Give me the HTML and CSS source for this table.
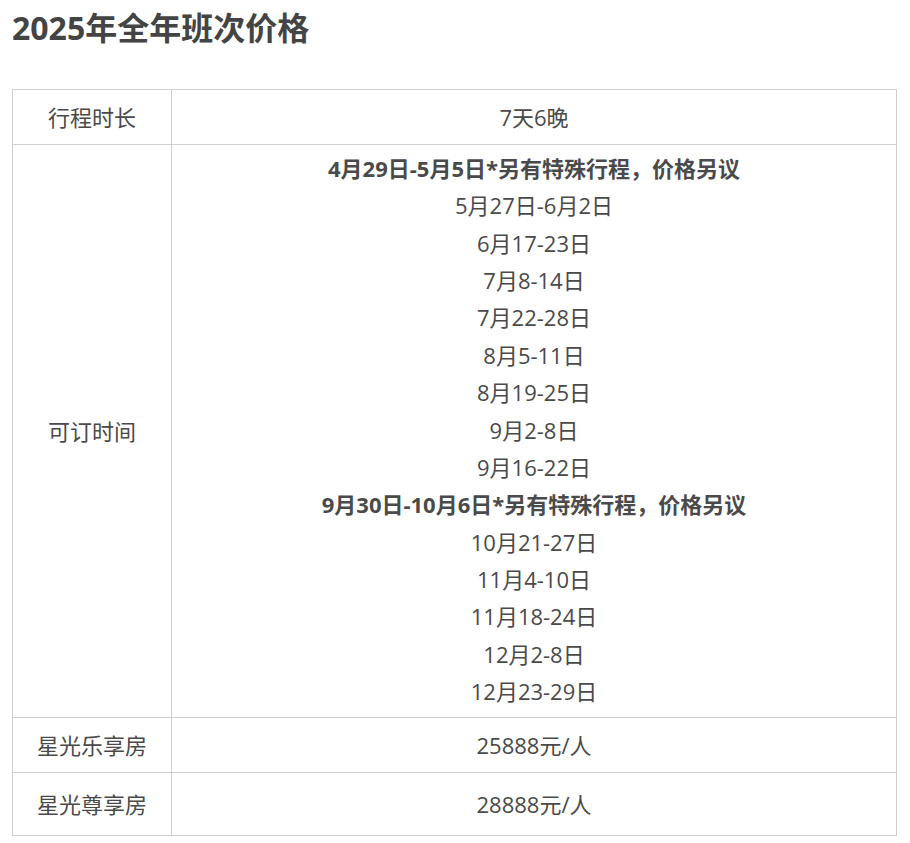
FILE: index.html
```html
<!DOCTYPE html>
<html lang="zh-CN">
<head>
<meta charset="utf-8">
<title>2025年全年班次价格</title>
<link rel="stylesheet" href="styles.css">
</head>
<body>
<h2 class="title">2025年全年班次价格</h2>
<table class="price-table">
  <colgroup><col class="col-label"><col class="col-value"></colgroup>
  <tr class="row">
    <td class="label">行程时长</td>
    <td class="value">7天6晚</td>
  </tr>
  <tr class="row dates">
    <td class="label">可订时间</td>
    <td class="value">
      <div class="line strong">4月29日-5月5日*另有特殊行程，价格另议</div>
      <div class="line">5月27日-6月2日</div>
      <div class="line">6月17-23日</div>
      <div class="line">7月8-14日</div>
      <div class="line">7月22-28日</div>
      <div class="line">8月5-11日</div>
      <div class="line">8月19-25日</div>
      <div class="line">9月2-8日</div>
      <div class="line">9月16-22日</div>
      <div class="line strong">9月30日-10月6日*另有特殊行程，价格另议</div>
      <div class="line">10月21-27日</div>
      <div class="line">11月4-10日</div>
      <div class="line">11月18-24日</div>
      <div class="line">12月2-8日</div>
      <div class="line">12月23-29日</div>
    </td>
  </tr>
  <tr class="row">
    <td class="label">星光乐享房</td>
    <td class="value">25888元/人</td>
  </tr>
  <tr class="row last">
    <td class="label">星光尊享房</td>
    <td class="value">28888元/人</td>
  </tr>
</table>
</body>
</html>
```

FILE: styles.css
```css
html, body {
  margin: 0;
  padding: 0;
  background: #ffffff;
}
body {
  padding: 0 13px 0 12px;
  font-family: "Open Sans", "Noto Sans CJK SC", sans-serif;
  color: #4a4a4a;
}
.title {
  margin: 0;
  padding-top: 6px;
  font-size: 32px;
  line-height: 44px;
  font-weight: 700;
  color: #444444;
}
.price-table {
  margin-top: 39px;
  width: 885px;
  border-collapse: collapse;
  table-layout: fixed;
  font-size: 22px;
}
.col-label { width: 159px; }
.price-table td {
  border: 1px solid #cfcfcf;
  text-align: center;
  vertical-align: middle;
  padding: 9px 4px 8px;
  line-height: 37px;
}
.row.dates .value {
  padding-top: 5px;
  padding-bottom: 7px;
  line-height: 37.36px;
}
.row.last td {
  padding-top: 13px;
  padding-bottom: 12px;
}
.strong {
  font-weight: 700;
}
```
